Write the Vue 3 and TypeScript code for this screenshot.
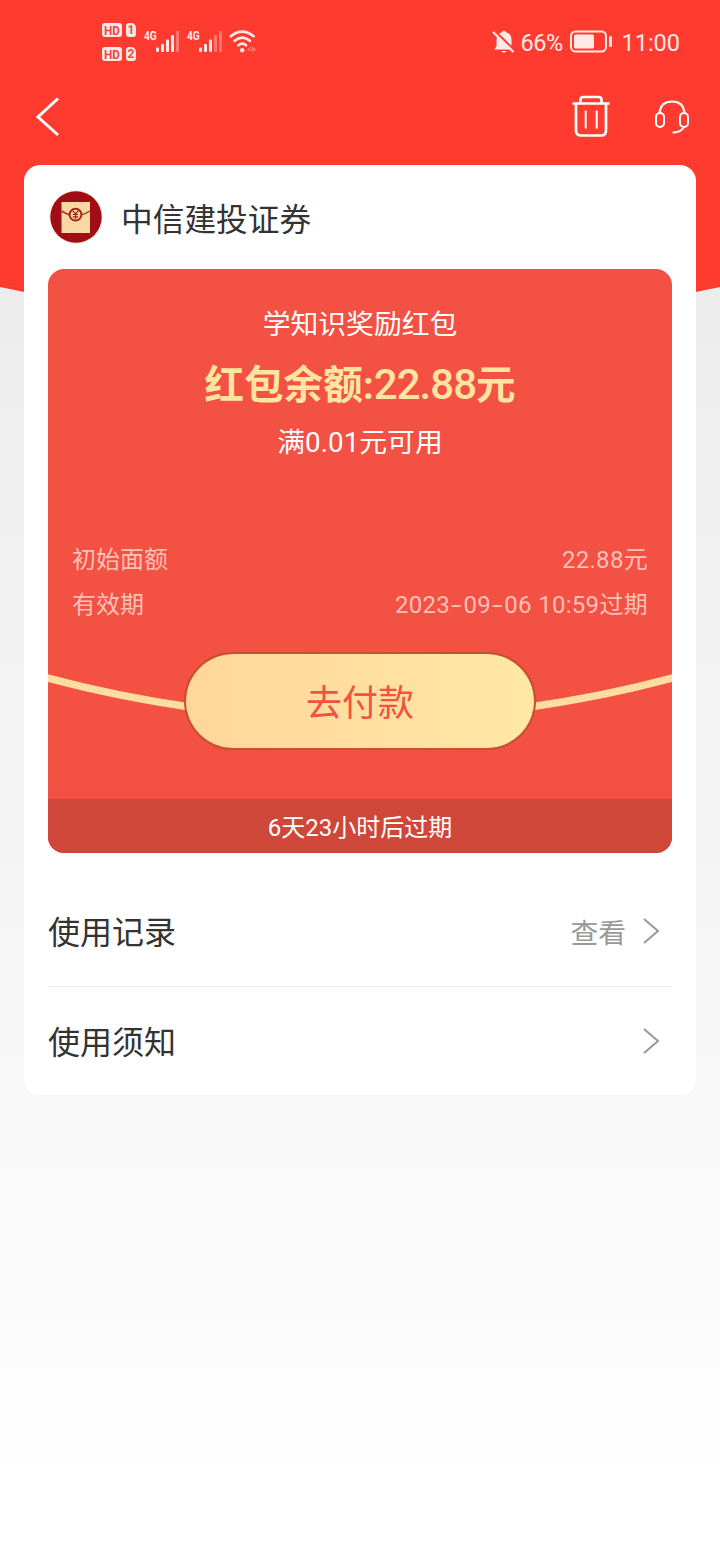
<script setup lang="ts">
interface DetailRow {
  label: string
  value: string
}

interface LinkRow {
  title: string
  hint?: string
}

interface Signal {
  id: number
  bars: number
}

const simCards: number[] = [1, 2]
const signals: Signal[] = [
  { id: 1, bars: 4 },
  { id: 2, bars: 3 },
]
const barLevels: number[] = [1, 2, 3, 4, 5]
const barTops: number[] = [17.5, 14, 9.5, 5, 1]

const details: DetailRow[] = [
  { label: '初始面额', value: '22.88元' },
  { label: '有效期', value: '2023-09-06 10:59过期' },
]

const links: LinkRow[] = [
  { title: '使用记录', hint: '查看' },
  { title: '使用须知' },
]

const splitDashes = (value: string): string[] => value.split(/(-)/)
</script>

<template>
  <div class="page">
    <svg class="backdrop" viewBox="0 0 720 310" aria-hidden="true">
      <path d="M0 0H720V287Q360 365 0 287Z" fill="#ff3b30" />
    </svg>

    <header class="status">
      <div class="status-left">
        <div class="sims">
          <div v-for="n in simCards" :key="n" class="sim">
            <span class="hd"><span>HD</span></span><span class="slot">{{ n }}</span>
          </div>
        </div>
        <div v-for="s in signals" :key="s.id" class="signal">
          <span class="net">4G</span>
          <svg width="24" height="23" viewBox="0 0 24 23">
            <rect
              v-for="(b, i) in barLevels"
              :key="b"
              :x="i * 5"
              :y="barTops[i]"
              width="3"
              :height="22 - barTops[i]"
              rx="1"
              fill="#ffe9e5"
              :opacity="b > s.bars ? 0.35 : 1"
            />
          </svg>
        </div>
        <svg class="wifi" width="28" height="24" viewBox="0 0 28 24" fill="none" stroke="#ffe9e5" stroke-width="2.7" stroke-linecap="round">
          <path d="M1.8 6.2Q13 -3 24.6 6.2" />
          <path d="M5.6 10.8Q13.2 4.4 20.9 10.8" />
          <path d="M9.4 15.3Q13.2 12 17 15.3" />
          <circle cx="13.2" cy="20.3" r="2.2" fill="#ffe9e5" stroke="none" />
          <path d="M21 17.5L19 20H21.5M23.5 22V17.5L26.5 20H25" stroke-width="1.2" opacity=".4" />
        </svg>
      </div>
      <div class="status-right">
        <svg width="24" height="26" viewBox="0 0 24 26">
          <path d="M2 20.5L4.5 17.5V11Q4.5 4.5 10 3.2Q12 .5 14 3.2Q19.5 4.5 19.5 11V17.5L22 20.5ZM9 22H15Q12 25.5 9 22Z" fill="#ffe9e5" />
          <path d="M2.4 1.8L23 22" stroke="#ff3b30" stroke-width="2.5" />
          <path d="M1 3L21.5 23" stroke="#ffe9e5" stroke-width="2.2" />
        </svg>
        <span class="percent">66%</span>
        <svg class="battery" width="43" height="24" viewBox="0 0 43 24">
          <rect x="1" y="1.5" width="35" height="20" rx="4.5" fill="none" stroke="#ffe9e5" stroke-width="2" />
          <rect x="4" y="4.5" width="20" height="14" rx="1.5" fill="#ffe9e5" />
          <rect x="39" y="6" width="3" height="11" rx="1.5" fill="#ffe9e5" />
        </svg>
        <span class="clock">11:00</span>
      </div>
    </header>

    <nav class="nav">
      <svg width="26" height="40" viewBox="0 0 26 40" fill="none" stroke="#fff" stroke-width="3">
        <path d="M23 1.5L3 20L23 38" />
      </svg>
      <div class="actions">
        <svg width="38" height="44" viewBox="0 0 38 44" fill="none" stroke="#fff" stroke-width="2.7">
          <path d="M.5 8.5H37.5M8.5 8V5Q8.5 2 11.5 2H26.5Q29.5 2 29.5 5V8M4 9V35.5Q4 40.5 9 40.5H29Q34 40.5 34 35.5V9" />
          <path d="M13.7 15.5V33.5M24.7 15.5V33.5" stroke-width="2" />
        </svg>
        <svg width="36" height="36" viewBox="0 0 36 36" fill="none" stroke="#fff" stroke-width="2">
          <rect x="2" y="14" width="8" height="14" rx="4" />
          <rect x="26" y="14" width="8" height="14" rx="4" />
          <path d="M5.5 14Q6.5 2.500 18 2.500T30.5 14M30 28Q27 33.500 18.5 33.500" />
        </svg>
      </div>
    </nav>

    <main class="card">
      <div class="merchant">
        <svg class="logo" width="54" height="54" viewBox="0 0 54 54">
          <circle cx="27" cy="27" r="26.5" fill="#f8dcd8" />
          <circle cx="27" cy="27" r="25.7" fill="#a00d14" />
          <rect x="12.5" y="12" width="28.5" height="31" fill="#fbd7a3" />
          <path d="M12.5 21Q18 24.5 22 25M31 25Q36 24.5 41 21" fill="none" stroke="#a33a20" stroke-width="1.5" />
          <circle cx="26.5" cy="24.7" r="5.9" fill="#fbd7a3" stroke="#a3261c" stroke-width="2" />
          <path d="M23.7 20.7L26.5 24L29.3 20.7M26.5 24V29M23.7 24.5H29.3M23.7 26.8H29.3" fill="none" stroke="#a3261c" stroke-width="1.2" />
        </svg>
        <span>中信建投证券</span>
      </div>

      <section class="coupon">
        <svg class="ribbon" viewBox="0 0 624 584" aria-hidden="true">
          <path d="M-10 406.5Q64 427 142 438" />
          <path d="M634 406.5Q560 427 482 438" />
        </svg>
        <h1>学知识奖励红包</h1>
        <p class="balance">红包余额:<span>22.88</span>元</p>
        <p class="rule">满0.01元可用</p>
        <dl class="details">
          <div v-for="row in details" :key="row.label">
            <dt>{{ row.label }}</dt>
            <dd><span v-for="(part, i) in splitDashes(row.value)" :key="i" :class="{ dash: part === '-' }">{{ part }}</span></dd>
          </div>
        </dl>
        <button class="pay" type="button">去付款</button>
        <footer>6天23小时后过期</footer>
      </section>

      <div class="links">
        <div v-for="link in links" :key="link.title" class="link">
          <span class="title">{{ link.title }}</span>
          <span v-if="link.hint" class="hint">{{ link.hint }}</span>
          <svg width="18" height="28" viewBox="0 0 18 28" fill="none" stroke="#999" stroke-width="2">
            <path d="M2 1L16 13L2 25" />
          </svg>
        </div>
      </div>
    </main>
  </div>
</template>

<style>
html,
body {
  margin: 0;
  overflow: hidden;
}
</style>

<style scoped>
.page {
  position: relative;
  box-sizing: border-box;
  width: 720px;
  height: 1560px;
  background: linear-gradient(#ededed 280px, #f8f8f8 1100px, #fff 1500px);
  font-family: Roboto, "Noto Sans CJK SC", sans-serif;
  color: #333;
}

.backdrop {
  position: absolute;
  top: 0;
  left: 0;
  width: 720px;
  height: 310px;
  clip-path: inset(0 0 10px 0);
}

.status,
.nav,
.card {
  position: relative;
}

.status {
  display: flex;
  justify-content: space-between;
  box-sizing: border-box;
  height: 84px;
  padding: 22px 40px 0 102px;
  color: #ffe9e5;
}

.status-left {
  display: flex;
}

.sims {
  display: flex;
  flex-direction: column;
  gap: 10px;
  margin-top: 1px;
}

.sim {
  display: flex;
  gap: 4px;
}

.hd,
.slot {
  height: 14px;
  border-radius: 3px;
  background: #ffe9e5;
  color: #f0483e;
  font: 700 13px/15px Roboto, sans-serif;
  text-align: center;
}

.hd {
  width: 20px;
}

.hd span {
  display: block;
  transform: scaleX(0.9);
}

.slot {
  width: 10px;
  border-top-right-radius: 5px;
  font-size: 12px;
}

.signal {
  display: flex;
  width: 43px;
}

.sims + .signal {
  margin-left: 8px;
}

.net {
  width: 12px;
  height: 26px;
  font: 700 13px/27px Roboto, sans-serif;
  transform: scaleX(0.78);
  transform-origin: left;
}

.signal svg {
  margin-top: 8px;
}

.wifi {
  margin: 8px 0 0 -1px;
}

.status-right {
  display: flex;
  align-items: center;
  height: 40px;
  font-size: 23.5px;
}

.percent {
  width: 50px;
  margin-left: 4px;
  padding-top: 2px;
  letter-spacing: -0.4px;
  line-height: 42px;
}

.clock {
  margin-left: 8px;
  padding-top: 2px;
}

.nav {
  display: flex;
  justify-content: space-between;
  align-items: center;
  height: 66px;
  padding: 0 30px 0 35px;
}

.actions {
  display: flex;
  align-items: center;
  gap: 44px;
}

.card {
  box-sizing: border-box;
  width: 672px;
  height: 930px;
  margin: 15px 24px 0;
  padding: 0 24px;
  border-radius: 16px;
  background: #fff;
}

.merchant {
  display: flex;
  align-items: center;
  gap: 18px;
  height: 104px;
  padding-left: 1px;
  font-size: 31.7px;
}

.coupon {
  position: relative;
  overflow: hidden;
  display: flex;
  flex-direction: column;
  height: 584px;
  border-radius: 16px;
  background: #f25143;
  color: #fff;
  text-align: center;
}

.ribbon {
  position: absolute;
  inset: 0;
  fill: none;
  stroke: #ffdc9f;
  stroke-width: 7.5;
}

h1 {
  margin: 36px 0 0;
  font-size: 27.8px;
  font-weight: 400;
  line-height: 40px;
}

.balance {
  margin: 11px 0 0;
  color: #ffe5a0;
  font-size: 39.6px;
  font-weight: 700;
  line-height: 58px;
}

.balance span {
  font-size: 42px;
  font-weight: 500;
  letter-spacing: -1px;
}

.rule {
  margin: 8px 0 0;
  font-size: 27.8px;
  line-height: 40px;
}

.details {
  margin: 75px 24px 0;
  color: #ffc0b6;
  font-size: 24px;
}

.details div {
  display: flex;
  justify-content: space-between;
  height: 45px;
  line-height: 45px;
}

dd {
  margin: 0;
  letter-spacing: 0.3px;
}

.dash {
  display: inline-block;
  margin: 0 3.2px;
  transform: scaleX(1.6);
}

.pay {
  position: relative;
  box-sizing: border-box;
  width: 352px;
  height: 98px;
  margin: 24px auto 0;
  padding: 6px 0 0;
  border: 2px solid #c7502f;
  border-radius: 49px;
  background: linear-gradient(90deg, #ffd69b, #ffe8a5);
  background-clip: padding-box;
  color: #f25143;
  font: 36px/88px Roboto, "Noto Sans CJK SC", sans-serif;
}

.coupon footer {
  height: 54px;
  margin-top: auto;
  background: #cf4739;
  font-size: 24px;
  line-height: 59px;
}

.links {
  padding-top: 24px;
}

.link {
  display: flex;
  align-items: center;
  height: 109px;
  padding-right: 12px;
}

.link + .link {
  border-top: 1px solid #eee;
}

.title {
  margin-right: auto;
  padding-bottom: 3px;
  font-size: 32px;
}

.hint {
  margin-right: 16px;
  padding-bottom: 1px;
  color: #999;
  font-size: 27.8px;
}
</style>
